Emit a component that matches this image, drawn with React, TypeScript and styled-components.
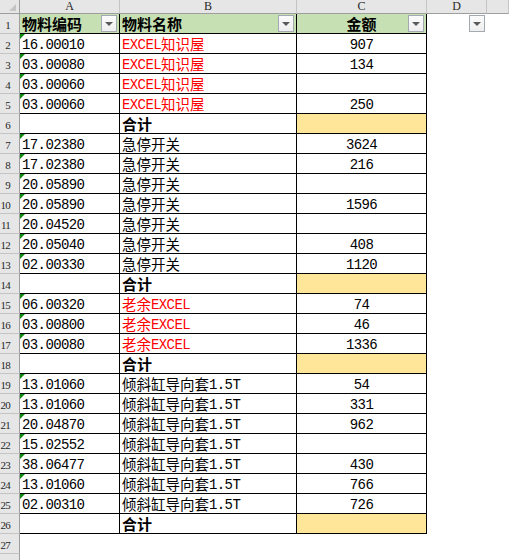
import React from "react";
import styled, { createGlobalStyle, css } from "styled-components";

const Global = createGlobalStyle`
  html, body { margin: 0; padding: 0; background: #fff; overflow: hidden; }
  body { font-family: "Noto Sans CJK SC", sans-serif; }
`;

const Sheet = styled.div`
  display: grid;
  grid-template-columns: 20px 100px 177px 130px 60px 1fr;
  grid-template-rows: 14px;
  grid-auto-rows: 20px;
  width: 509px;
  height: 560px;
  overflow: hidden;
`;

const HeadBase = css`
  background: #e6e6e6;
  box-sizing: border-box;
  color: #262626;
`;

const Corner = styled.div`
  ${HeadBase};
  position: relative;
  border-right: 1px solid #9e9e9e;
  border-bottom: 1px solid #9e9e9e;
  &::after {
    content: "";
    position: absolute;
    right: 3px;
    bottom: 2px;
    width: 0;
    height: 0;
    border-left: 7px solid transparent;
    border-bottom: 7px solid #c4c4c4;
  }
`;

const ColHead = styled.div`
  ${HeadBase};
  border-right: 1px solid #c4c4c4;
  border-bottom: 1px solid #9e9e9e;
  font-family: "Liberation Serif", serif;
  font-size: 12px;
  line-height: 13px;
  text-align: center;
`;

const RowHead = styled.div`
  ${HeadBase};
  border-right: 1px solid #9e9e9e;
  border-bottom: 1px solid #c4c4c4;
  font-family: "Liberation Serif", serif;
  font-size: 11px;
  display: flex;
  align-items: flex-end;
  justify-content: flex-end;
  padding: 0 9px 2px 0;
  letter-spacing: -0.8px;
`;

const Cell = styled.div<{
  $edge?: boolean;
  $bg?: string;
  $center?: boolean;
  $red?: boolean;
  $bold?: boolean;
  $flag?: boolean;
}>`
  position: relative;
  box-sizing: border-box;
  display: flex;
  align-items: center;
  justify-content: ${(p) => (p.$center ? "center" : "flex-start")};
  padding: 0 2px;
  background: ${(p) => p.$bg || "#fff"};
  color: ${(p) => (p.$red ? "#ff0000" : "#000")};
  font-family: "Noto Sans CJK SC", sans-serif;
  font-size: ${(p) => (p.$bold ? "15px" : "14.5px")};
  font-weight: ${(p) => (p.$bold ? 700 : 400)};
  white-space: nowrap;
  ${(p) =>
    p.$edge &&
    css`
      border-right: 1px solid #000;
      border-bottom: 1px solid #000;
    `}
  ${(p) =>
    p.$flag &&
    css`
      &::before {
        content: "";
        position: absolute;
        left: 0;
        top: 0;
        width: 0;
        height: 0;
        border-top: 5px solid #0d8a0d;
        border-right: 5px solid transparent;
      }
    `}
`;

const Text = styled.span`
  display: block;
  line-height: 19px;
  height: 19px;
`;

const Latin = styled.span`
  font-family: "Liberation Mono", monospace;
  font-size: 14px;
  font-weight: 400;
  letter-spacing: -0.6px;
  vertical-align: 1.5px;
`;

const FilterButton = styled.span`
  position: absolute;
  right: 2px;
  top: 1px;
  width: 16px;
  height: 17px;
  box-sizing: border-box;
  border: 1px solid #a3a9b1;
  background: linear-gradient(#fbfbfb, #eeeeee);
  display: flex;
  align-items: center;
  justify-content: center;
  &::after {
    content: "";
    width: 0;
    height: 0;
    border-left: 4px solid transparent;
    border-right: 4px solid transparent;
    border-top: 4px solid #5a5a5a;
  }
`;

type Row = { code?: string; name?: string; amount?: string; red?: boolean; total?: boolean };

const rows: Row[] = [
  { code: "16.00010", name: "EXCEL知识屋", amount: "907", red: true },
  { code: "03.00080", name: "EXCEL知识屋", amount: "134", red: true },
  { code: "03.00060", name: "EXCEL知识屋", amount: "", red: true },
  { code: "03.00060", name: "EXCEL知识屋", amount: "250", red: true },
  { total: true },
  { code: "17.02380", name: "急停开关", amount: "3624" },
  { code: "17.02380", name: "急停开关", amount: "216" },
  { code: "20.05890", name: "急停开关", amount: "" },
  { code: "20.05890", name: "急停开关", amount: "1596" },
  { code: "20.04520", name: "急停开关", amount: "" },
  { code: "20.05040", name: "急停开关", amount: "408" },
  { code: "02.00330", name: "急停开关", amount: "1120" },
  { total: true },
  { code: "06.00320", name: "老余EXCEL", amount: "74", red: true },
  { code: "03.00800", name: "老余EXCEL", amount: "46", red: true },
  { code: "03.00080", name: "老余EXCEL", amount: "1336", red: true },
  { total: true },
  { code: "13.01060", name: "倾斜缸导向套1.5T", amount: "54" },
  { code: "13.01060", name: "倾斜缸导向套1.5T", amount: "331" },
  { code: "20.04870", name: "倾斜缸导向套1.5T", amount: "962" },
  { code: "15.02552", name: "倾斜缸导向套1.5T", amount: "" },
  { code: "38.06477", name: "倾斜缸导向套1.5T", amount: "430" },
  { code: "13.01060", name: "倾斜缸导向套1.5T", amount: "766" },
  { code: "02.00310", name: "倾斜缸导向套1.5T", amount: "726" },
  { total: true },
];

function Mixed({ text }: { text?: string }) {
  if (!text) return null;
  const parts = text.split(/([\x00-\x7f]+)/).filter(Boolean);
  return (
    <Text>
      {parts.map((p, i) =>
        /^[\x00-\x7f]+$/.test(p) ? <Latin key={i}>{p}</Latin> : <span key={i}>{p}</span>
      )}
    </Text>
  );
}

export default function App() {
  return (
    <>
      <Global />
      <Sheet>
        <Corner />
        <ColHead>A</ColHead>
        <ColHead>B</ColHead>
        <ColHead>C</ColHead>
        <ColHead>D</ColHead>
        <ColHead />

        <RowHead>1</RowHead>
        <Cell $edge $bg="#c6e0b4" $bold>
          <Text>物料编码</Text>
          <FilterButton />
        </Cell>
        <Cell $edge $bg="#c6e0b4" $bold>
          <Text>物料名称</Text>
          <FilterButton />
        </Cell>
        <Cell $edge $bg="#c6e0b4" $bold $center>
          <Text>金额</Text>
          <FilterButton />
        </Cell>
        <Cell>
          <FilterButton />
        </Cell>
        <Cell />

        {rows.map((r, i) => (
          <React.Fragment key={i}>
            <RowHead>{i + 2}</RowHead>
            <Cell $edge $flag={!!r.code}>
              <Mixed text={r.code} />
            </Cell>
            {r.total ? (
              <Cell $edge $bold>
                <Text>合计</Text>
              </Cell>
            ) : (
              <Cell $edge $red={r.red}>
                <Mixed text={r.name} />
              </Cell>
            )}
            <Cell $edge $center $bg={r.total ? "#ffe699" : undefined}>
              <Mixed text={r.amount} />
            </Cell>
            <Cell />
            <Cell />
          </React.Fragment>
        ))}

        <RowHead>27</RowHead>
        <Cell />
        <Cell />
        <Cell />
        <Cell />
        <Cell />
        <RowHead />
        <Cell />
        <Cell />
        <Cell />
        <Cell />
        <Cell />
      </Sheet>
    </>
  );
}
